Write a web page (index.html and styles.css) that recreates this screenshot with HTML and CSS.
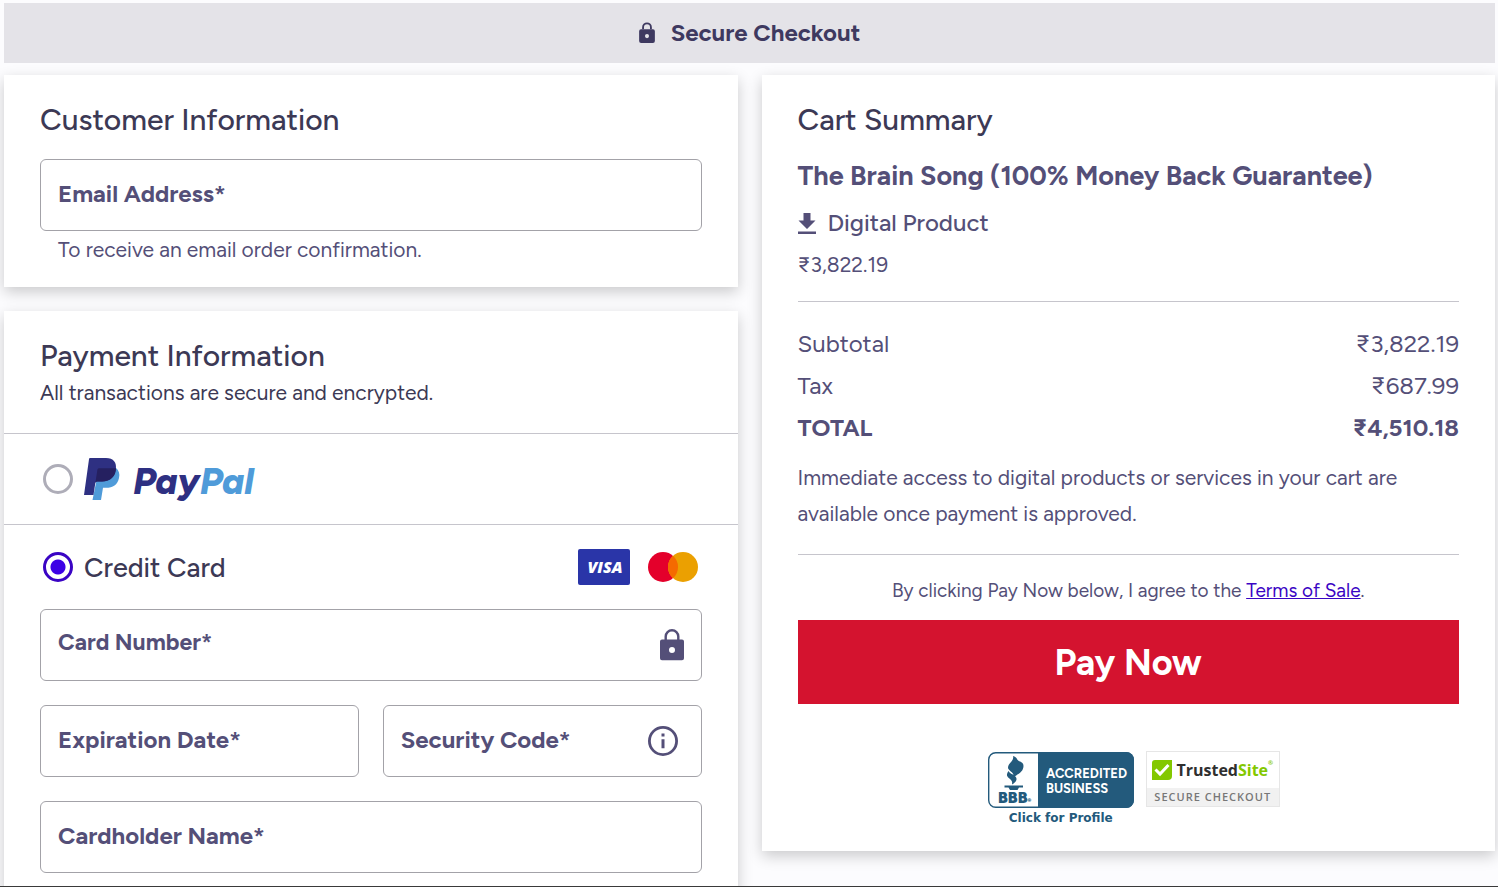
FILE: index.html
```
<!DOCTYPE html>
<html lang="en">
<head>
    <meta charset="UTF-8">
    <meta name="viewport" content="width=device-width, initial-scale=1.0">
    <title>Secure Checkout</title>
    <link rel="stylesheet" href="styles.css">
</head>
<body>
    <header class="secure-bar">
        <svg class="secure-icon" viewBox="0 0 24 32" aria-hidden="true">
            <path d="M6 11V8a6 6 0 0 1 12 0v3" fill="none" stroke="currentColor" stroke-width="2.8"/>
            <path fill-rule="evenodd" fill="currentColor" d="M3 11h18a3 3 0 0 1 3 3v15a3 3 0 0 1-3 3H3a3 3 0 0 1-3-3V14a3 3 0 0 1 3-3zm9 7.400a3.100 3.100 0 1 0 0 6.200a3.100 3.100 0 0 0 0-6.200z"/>
        </svg>
        <h1>Secure Checkout</h1>
    </header>

    <main class="checkout">
        <form class="column" id="checkout-form">
            <section class="card customer">
                <h2>Customer Information</h2>
                <div class="field">
                    <label for="email">Email Address*</label>
                    <input type="email" id="email" name="email" required>
                </div>
                <p class="hint">To receive an email order confirmation.</p>
            </section>

            <section class="card payment">
                <div class="payment-intro">
                    <h2>Payment Information</h2>
                    <p>All transactions are secure and encrypted.</p>
                </div>

                <div class="method paypal-row">
                    <input type="radio" id="paypal" name="method" value="paypal">
                    <label for="paypal" class="paypal">
                        <svg class="paypal-mark" viewBox="0 0 36 42" aria-hidden="true">
                            <path fill="#4f9bd9" d="M15 10h17c3 2.500 4 6 3 10c-1.600 7-6 9.800-13 9.800h-3L17 42H8.500z"/>
                            <path fill="#2e3082" d="M6 0h16c7.500 0 11 4.500 9.800 11.500C30.500 19.500 25.500 23.400 18 23.400h-4.500c-1.500 0-2 .8-2.300 2.400L9.500 37H0L5 1.200C5.100.4 5.400 0 6 0z"/>
                            <path fill="#252060" d="M15.500 10.200H32c0 8-5.500 13.200-14 13.200h-4.500c-1.200 0-1.900.6-2.200 2l2-13.200c.2-1.400.9-2 2.200-2z"/>
                        </svg>
                        <span class="paypal-name"><span class="pay">Pay</span><span class="pal">Pal</span></span>
                    </label>
                </div>

                <div class="card-section">
                    <div class="method">
                        <input type="radio" id="credit-card" name="method" value="card" checked>
                        <label for="credit-card" class="method-name">Credit Card</label>
                        <div class="brands">
                            <svg class="brand" viewBox="0 0 52 36" role="img" aria-label="Visa">
                                <rect width="52" height="36" rx="2" fill="#2a35a8"/>
                                <text x="27" y="24" text-anchor="middle" class="visa-text">VISA</text>
                            </svg>
                            <svg class="brand" viewBox="0 0 52 36" role="img" aria-label="Mastercard">
                                <circle cx="17" cy="18" r="15" fill="#e4002b"/>
                                <circle cx="37" cy="18" r="15" fill="#eba001"/>
                                <path fill="#f56a00" d="M27 6.800a15 15 0 0 1 0 22.400a15 15 0 0 1 0-22.400z"/>
                            </svg>
                        </div>
                    </div>

                    <div class="card-fields">
                        <div class="field wide card-number">
                            <label for="card-number">Card Number*</label>
                            <input type="text" id="card-number" name="card-number" inputmode="numeric" required>
                            <svg class="lock-icon" viewBox="0 0 24 32" aria-hidden="true">
                                <path d="M5.700 11V7.500a6.300 6.300 0 0 1 12.600 0V11" fill="none" stroke="currentColor" stroke-width="2.400"/>
                                <path fill-rule="evenodd" fill="currentColor" d="M2 10.600h20a2 2 0 0 1 2 2v16.600a2 2 0 0 1-2 2H2a2 2 0 0 1-2-2V12.600a2 2 0 0 1 2-2zm10 7.400a3 3 0 1 0 0 6a3 3 0 0 0 0-6z"/>
                            </svg>
                        </div>
                        <div class="field">
                            <label for="expiration">Expiration Date*</label>
                            <input type="text" id="expiration" name="expiration" required>
                        </div>
                        <div class="field">
                            <label for="security-code">Security Code*</label>
                            <input type="text" id="security-code" name="security-code" required>
                            <svg class="info-icon" viewBox="0 0 30 30" aria-hidden="true">
                                <circle cx="15" cy="15" r="13.600" fill="none" stroke="currentColor" stroke-width="2.800"/>
                                <path fill="currentColor" d="M13.500 7.500h3v3h-3zM13.500 13.300h3v9h-3z"/>
                            </svg>
                        </div>
                        <div class="field wide">
                            <label for="cardholder">Cardholder Name*</label>
                            <input type="text" id="cardholder" name="cardholder" required>
                        </div>
                    </div>
                </div>
            </section>
        </form>

        <section class="card cart">
            <h2>Cart Summary</h2>
            <h3>The Brain Song (100% Money Back Guarantee)</h3>
            <p class="product-type">
                <svg class="download-icon" viewBox="0 0 18 21" aria-hidden="true">
                    <path fill="currentColor" d="M5.500 0h7v7.500h5L9 16L.5 7.500h5zM0 18.600h18V21H0z"/>
                </svg>
                Digital Product
            </p>
            <p class="product-price">₹3,822.19</p>

            <table class="totals">
                <tr>
                    <th scope="row">Subtotal</th>
                    <td>₹3,822.19</td>
                </tr>
                <tr>
                    <th scope="row">Tax</th>
                    <td>₹687.99</td>
                </tr>
                <tr class="grand-total">
                    <th scope="row">TOTAL</th>
                    <td>₹4,510.18</td>
                </tr>
            </table>

            <p class="access-note">Immediate access to digital products or services in your cart are available once payment is approved.</p>

            <p class="terms">By clicking Pay Now below, I agree to the <a href="#terms">Terms of Sale</a>.</p>
            <button type="submit" form="checkout-form" class="pay-now">Pay Now</button>

            <div class="seals">
                <a href="#bbb" class="bbb">
                    <svg class="bbb-seal" viewBox="0 0 146 56" role="img" aria-label="BBB Accredited Business">
                        <rect x=".7" y=".7" width="144.600" height="54.600" rx="7" fill="#fff" stroke="#235a7c" stroke-width="1.400"/>
                        <path fill="#235a7c" d="M50 0h88a8 8 0 0 1 8 8v40a8 8 0 0 1-8 8H50z"/>
                        <path fill="#235a7c" d="M25 4c1.500 5-5 7-5 11.500c0 3.500 6.500 4.500 5.500 9.500c5-3 10-5.500 10-11c0-5-5.500-4-6.500-7c-.5-1.500-2-2.500-4-3z"/>
                        <path fill="#235a7c" d="M20.500 19c-2.500 3.500-2 5.500 1.500 8c2 1.500 2.500 3 2 5.500c5-3 6-6 2.500-9c-2-1.500-5-2-6-4.500z"/>
                        <path fill="#235a7c" d="M16.500 33.500h18.500v2h-4l-1.500 2.500h-7.500l-1.500-2.500h-4z"/>
                        <text x="10" y="51" class="bbb-text">BBB<tspan class="bbb-reg">®</tspan></text>
                        <text x="58" y="26" class="seal-text">ACCREDITED</text>
                        <text x="58" y="41" class="seal-text">BUSINESS</text>
                    </svg>
                    <span class="bbb-link">Click for Profile</span>
                </a>
                <a href="#trustedsite" class="trusted">
                    <span class="trusted-name">
                        <svg class="trusted-check" viewBox="0 0 20 20" aria-hidden="true">
                            <path fill="#83c800" d="M3 0h17v16a4 4 0 0 1-4 4H0V3a3 3 0 0 1 3-3z"/>
                            <path fill="none" stroke="#fff" stroke-width="3" d="M3.500 9.500L8 14L16.500 5"/>
                        </svg>
                        <span>Trusted<span class="site">Site</span><span class="reg">®</span></span>
                    </span>
                    <span class="trusted-caption">SECURE CHECKOUT</span>
                </a>
            </div>
        </section>
    </main>
</body>
</html>
```
FILE: styles.css
```
* {
    box-sizing: border-box;
}

body {
    margin: 0;
    padding: 3px 3px 0 4px;
    height: 100vh;
    overflow: hidden;
    border-bottom: 1px solid #3a3a3a;
    background-color: #fcfcfe;
    color: #544f78;
    font-family: Figtree, Inter, sans-serif;
    font-size: 21px;
}

h1, h2, h3, p {
    margin: 0;
}

h2 {
    color: #3c3955;
    font-size: 30px;
    font-weight: 500;
    line-height: 36px;
}

.secure-bar {
    display: flex;
    justify-content: center;
    align-items: center;
    gap: 16px;
    height: 60px;
    padding-bottom: 2px;
    background-color: #e4e3e8;
    color: #3e3960;
}

.secure-bar h1 {
    font-size: 24px;
    font-weight: 700;
}

.secure-icon {
    width: 16px;
    height: 21px;
}

.checkout {
    display: grid;
    grid-template-columns: 1fr 1fr;
    align-items: start;
    gap: 24px;
    margin-top: 12px;
}

.column {
    display: grid;
    gap: 24px;
}

.card {
    background-color: #fff;
    box-shadow: 0 5px 14px rgba(0, 0, 0, 0.2);
}

/* Customer information */
.customer {
    padding: 27px 36px 25px;
}

.customer .field {
    margin-top: 21px;
}

.hint {
    padding: 6px 18px 0;
    line-height: 25px;
}

/* Label and input share one grid cell */
.field {
    display: grid;
    grid-template-columns: minmax(0, 1fr) auto;
    align-items: center;
    height: 72px;
    border: 1px solid #a3a2a8;
    border-radius: 6px;
}

.field label {
    grid-area: 1 / 1;
    padding: 0 17px 4px;
    font-size: 24px;
    font-weight: 700;
}

.field input {
    grid-area: 1 / 1 / 2 / 3;
    width: 100%;
    height: 100%;
    padding: 0 17px;
    border: none;
    border-radius: 6px;
    background: transparent;
    font: inherit;
}

.card-number label {
    padding-bottom: 6px;
    font-size: 23px;
}

.lock-icon {
    grid-area: 1 / 2;
    width: 24px;
    height: 32px;
    margin-right: 17px;
}

.info-icon {
    grid-area: 1 / 2;
    width: 30px;
    height: 30px;
    margin-right: 23px;
}

/* Payment information */
.payment-intro {
    padding: 27px 36px;
    color: #3c3955;
}

.payment-intro p {
    padding-top: 5px;
    line-height: 27px;
}

.method {
    display: flex;
    align-items: center;
    gap: 11px;
}

.method input {
    appearance: none;
    width: 30px;
    height: 30px;
    margin: 0;
    border: 3px solid #aeadb8;
    border-radius: 50%;
}

.method input:checked {
    border-color: #3a04c4;
    background: radial-gradient(circle, #3d00e6 7px, #fff 8px);
}

.paypal-row {
    height: 92px;
    padding: 0 39px;
    border: 1px solid #c6c5cc;
    border-width: 1px 0;
}

.paypal {
    display: flex;
    align-items: center;
    gap: 13px;
}

.paypal-mark {
    width: 36px;
    height: 42px;
}

.paypal-name {
    padding-top: 4px;
    font-size: 37px;
    font-style: italic;
    font-weight: 800;
    line-height: 42px;
}

.pay {
    color: #2e3082;
}

.pal {
    color: #4f9bd9;
}

.card-section {
    padding: 24px 36px;
}

.card-section .method {
    padding: 0 4px 0 3px;
}

.method-name {
    color: #3c3955;
    font-size: 27px;
    font-weight: 500;
}

.brands {
    display: flex;
    gap: 16px;
    margin-left: auto;
}

.brand {
    width: 52px;
    height: 36px;
}

.visa-text {
    fill: #fff;
    font: italic 800 16px "Open Sans", sans-serif;
}

.card-fields {
    display: grid;
    grid-template-columns: 1fr 1fr;
    gap: 24px;
    margin-top: 24px;
}

.wide {
    grid-column: 1 / 3;
}

/* Cart summary */
.cart {
    padding: 27px 36px 26px;
}

.cart h3 {
    margin-top: 21px;
    font-size: 27px;
    font-weight: 700;
    line-height: 34px;
}

.product-type {
    display: flex;
    align-items: center;
    gap: 12px;
    margin-top: 12px;
    font-size: 24px;
    font-weight: 500;
    line-height: 36px;
}

.download-icon {
    width: 18px;
    height: 21px;
}

.product-price {
    padding: 8px 0 20px;
    border-bottom: 1px solid #c6c5cc;
    line-height: 32px;
}

.totals {
    width: 100%;
    margin-top: 21px;
    border-collapse: collapse;
    font-size: 24px;
    line-height: 42px;
}

.totals th, .totals td {
    padding: 0;
    font-weight: 400;
    text-align: left;
}

.totals td {
    text-align: right;
}

.totals .grand-total th, .totals .grand-total td {
    font-weight: 700;
}

.access-note {
    padding: 11px 0 22px;
    border-bottom: 1px solid #c6c5cc;
    line-height: 36px;
}

.terms {
    padding: 20px 0 13px;
    font-size: 19px;
    line-height: 32px;
    text-align: center;
}

.terms a {
    color: #3a04c4;
}

.pay-now {
    display: block;
    width: 100%;
    height: 84px;
    border: none;
    background-color: #d4132f;
    color: #fff;
    font: 700 36px Figtree, Inter, sans-serif;
    cursor: pointer;
}

.seals {
    display: flex;
    justify-content: center;
    align-items: flex-start;
    gap: 12px;
    margin-top: 47px;
    padding-left: 11px;
}

.seals a {
    text-decoration: none;
}

.bbb {
    display: grid;
    gap: 3px;
    color: #235a7c;
    text-align: center;
}

.bbb-seal {
    width: 146px;
    height: 56px;
    margin-top: 1px;
}

.bbb-text {
    fill: #235a7c;
    font: 900 16px Figtree, Inter, sans-serif;
}

.bbb-reg {
    font-size: 6px;
}

.seal-text {
    fill: #fff;
    font: 700 13px Figtree, Inter, sans-serif;
}

.bbb-link {
    font: 700 12px "DejaVu Sans", sans-serif;
    line-height: 14px;
}

.trusted {
    width: 134px;
    border: 1px solid #e6e6e6;
}

.trusted-name {
    display: flex;
    justify-content: center;
    align-items: center;
    gap: 4px;
    height: 36px;
    color: #2f2f2f;
    font: 700 16px "Open Sans", sans-serif;
}

.trusted-check {
    width: 20px;
    height: 20px;
}

.site {
    color: #83c800;
}

.reg {
    color: #83c800;
    font-size: 6px;
    vertical-align: top;
}

.trusted-caption {
    display: block;
    background-color: #f1f1f1;
    color: #777;
    font: 600 11px "Open Sans", sans-serif;
    letter-spacing: 1px;
    line-height: 18px;
    text-align: center;
}
```
